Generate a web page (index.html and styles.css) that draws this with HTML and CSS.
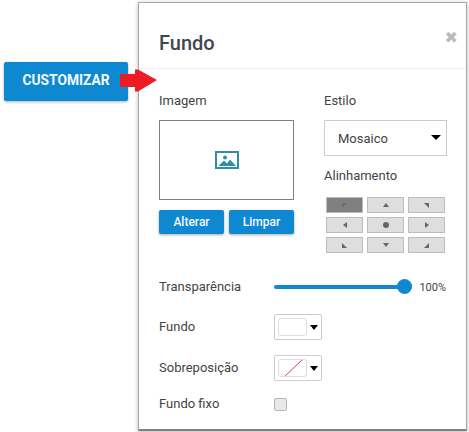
FILE: index.html
```html
<!DOCTYPE html>
<html lang="en">
<head>
  <meta charset="UTF-8" />
  <title>Fundo</title>
  <link rel="stylesheet" href="styles.css">
</head>
<body>
  <div class="page">
    <a class="customize" href="#">CUSTOMIZAR</a>

    <div class="modal">
      <div class="modal-head">
        <h2>Fundo</h2>
        <span class="close">&#10006;</span>
      </div>

      <div class="modal-body">
        <div class="columns">
          <div class="col-image">
            <div class="label">Imagem</div>
            <div class="image-box">
              <svg width="24" height="18" viewBox="0 0 24 18">
                <rect x="1" y="1" width="22" height="16" fill="none" stroke="#2f8fa8" stroke-width="2"/>
                <circle cx="10" cy="6.5" r="2" fill="#2f8fa8"/>
                <path d="M3.5 15 L9 9.5 L12 12.5 L15 8.5 L21 15 Z" fill="#2f8fa8"/>
              </svg>
            </div>
            <div class="image-buttons">
              <a class="btn" href="#">Alterar</a>
              <a class="btn" href="#">Limpar</a>
            </div>
          </div>

          <div class="col-style">
            <div class="label">Estilo</div>
            <div class="select">
              <span>Mosaico</span>
              <i class="caret"></i>
            </div>
            <div class="label label-align">Alinhamento</div>
            <div class="align-grid">
              <div class="cell active"><i class="corner tl"></i></div>
              <div class="cell"><i class="tri up"></i></div>
              <div class="cell"><i class="corner tr"></i></div>
              <div class="cell"><i class="tri left"></i></div>
              <div class="cell"><i class="dot"></i></div>
              <div class="cell"><i class="tri right"></i></div>
              <div class="cell"><i class="corner bl"></i></div>
              <div class="cell"><i class="tri down"></i></div>
              <div class="cell"><i class="corner br"></i></div>
            </div>
          </div>
        </div>

        <div class="row row-slider">
          <div class="row-label">Transparência</div>
          <div class="slider"><div class="slider-knob"></div></div>
          <div class="slider-value">100%</div>
        </div>

        <div class="row row-fundo">
          <div class="row-label">Fundo</div>
          <div class="swatch-picker">
            <div class="swatch"></div>
            <i class="caret small"></i>
          </div>
        </div>

        <div class="row row-over">
          <div class="row-label">Sobreposição</div>
          <div class="swatch-picker">
            <div class="swatch">
              <svg width="28" height="17" viewBox="0 0 28 17"><line x1="5" y1="17" x2="23" y2="0" stroke="#e0324b" stroke-width="1"/></svg>
            </div>
            <i class="caret small"></i>
          </div>
        </div>

        <div class="row row-fixed">
          <div class="row-label">Fundo fixo</div>
          <div class="checkbox"></div>
        </div>
      </div>
    </div>

    <svg class="arrow" width="38" height="24" viewBox="0 0 38 24">
      <path d="M0 5 H15 V0.5 H18 L37 11 L18 22.5 H15 V18 H0 Z" fill="#ed1c24"/>
    </svg>
  </div>
</body>
</html>
```

FILE: styles.css
```css
* {
  box-sizing: border-box;
}

html, body {
  margin: 0;
  padding: 0;
  background: #fff;
}

body {
  font-family: Roboto, "Liberation Sans", sans-serif;
  color: #444;
  overflow: hidden;
}

.page {
  position: relative;
  width: 469px;
  height: 432px;
  display: flex;
  align-items: flex-start;
  padding: 2px 2px 0 4px;
}

.customize {
  margin-top: 60px;
  width: 124px;
  height: 39px;
  line-height: 36px;
  text-align: center;
  background: #0f88d2;
  color: #f4f9fd;
  font-size: 13.8px;
  font-weight: 700;
  border-radius: 2px;
  text-decoration: none;
  box-shadow: 0 1px 3px rgba(0,0,0,0.3);
}

.modal {
  margin-left: 10px;
  width: 329px;
  height: 429px;
  background: #fff;
  border: 1px solid #a8a8a8;
  border-bottom: 2px solid #808080;
  box-shadow: 0 1px 4px rgba(0,0,0,0.3);
}

.modal-head {
  height: 66px;
  border-bottom: 1px solid #f0f0f0;
  display: flex;
  justify-content: space-between;
  padding: 27px 8px 0 20px;
}

.modal-head h2 {
  margin: 0;
  font-size: 20px;
  font-weight: 500;
  line-height: 26px;
  color: #3f4650;
}

.close {
  color: #bbb;
  font-size: 16px;
  line-height: 16px;
  font-family: "DejaVu Sans", sans-serif;
}

.modal-body {
  padding: 24px 20px 0 20px;
}

.columns {
  display: flex;
}

.label, .row-label {
  font-size: 13px;
  line-height: 16px;
  color: #444;
}

.col-image {
  width: 165px;
  flex: none;
}

.image-box {
  margin-top: 11px;
  width: 135px;
  height: 80px;
  border: 1px solid #808080;
  display: flex;
  align-items: center;
  justify-content: center;
}

.image-buttons {
  display: flex;
  gap: 5px;
  margin-top: 10px;
}

.btn {
  width: 65px;
  height: 24px;
  line-height: 24px;
  text-align: center;
  background: #0f88d2;
  color: #f4f9fd;
  font-size: 12px;
  font-weight: 500;
  border-radius: 2px;
  text-decoration: none;
  box-shadow: 0 1px 3px rgba(0,0,0,0.35);
}

.col-style {
  flex: 1;
}

.select {
  margin-top: 11px;
  width: 123px;
  height: 36px;
  border: 1px solid #ccc;
  display: flex;
  align-items: center;
  justify-content: space-between;
  padding: 0 5px 0 13px;
  font-size: 13px;
  color: #444;
}

.caret {
  width: 0;
  height: 0;
  border-left: 5px solid transparent;
  border-right: 5px solid transparent;
  border-top: 5px solid #000;
}

.select .caret {
  margin-top: -2px;
}

.caret.small {
  border-left-width: 4px;
  border-right-width: 4px;
}

.label-align {
  margin-top: 12px;
}

.align-grid {
  margin-top: 13px;
  margin-left: 2px;
  display: grid;
  grid-template-columns: repeat(3, 37px);
  grid-auto-rows: 16px;
  gap: 4px;
}

.cell {
  background: #dedede;
  border: 1px solid #bdbdbd;
  display: flex;
  align-items: center;
  justify-content: center;
}

.cell.active {
  background: #808080;
}

.cell i {
  display: block;
}

.tri {
  width: 0;
  height: 0;
}

.tri.up {
  border-left: 3px solid transparent;
  border-right: 3px solid transparent;
  border-bottom: 4px solid #666;
}

.tri.down {
  border-left: 3px solid transparent;
  border-right: 3px solid transparent;
  border-top: 4px solid #666;
}

.tri.left {
  border-top: 3px solid transparent;
  border-bottom: 3px solid transparent;
  border-right: 4px solid #666;
}

.tri.right {
  border-top: 3px solid transparent;
  border-bottom: 3px solid transparent;
  border-left: 4px solid #666;
}

.dot {
  width: 6px;
  height: 6px;
  border-radius: 50%;
  background: #666;
}

.corner {
  width: 0;
  height: 0;
  border-style: solid;
}

.corner.tl {
  border-width: 5px 5px 0 0;
  border-color: #6e6e6e transparent transparent transparent;
}

.corner.tr {
  border-width: 0 5px 5px 0;
  border-color: transparent #666 transparent transparent;
}

.corner.bl {
  border-width: 5px 0 0 5px;
  border-color: transparent transparent transparent #666;
}

.corner.br {
  border-width: 0 0 5px 5px;
  border-color: transparent transparent #666 transparent;
}

.row {
  display: flex;
  align-items: center;
}

.row-label {
  width: 115px;
  flex: none;
}

.row-slider {
  margin-top: 24px;
  height: 20px;
}

.slider {
  position: relative;
  width: 139px;
  height: 4px;
  background: #0f88d2;
  border-radius: 2px;
}

.slider-knob {
  position: absolute;
  right: 0;
  top: -6px;
  width: 15px;
  height: 15px;
  border-radius: 50%;
  background: #0f88d2;
}

.slider-value {
  margin-left: 7px;
  font-size: 11px;
  color: #444;
}

.row-fundo {
  margin-top: 17px;
}

.row-over {
  margin-top: 15px;
}

.row-fixed {
  margin-top: 15px;
}

.swatch-picker {
  width: 48px;
  height: 26px;
  border: 1px solid #ccc;
  border-radius: 2px;
  display: flex;
  align-items: center;
  justify-content: space-between;
  padding: 0 3px;
}

.swatch {
  width: 29px;
  height: 18px;
  border: 1px solid #ddd;
  border-radius: 3px;
  background: #fff;
  overflow: hidden;
}

.swatch svg {
  display: block;
}

.checkbox {
  width: 13px;
  height: 13px;
  border: 1px solid #b4b4b4;
  border-radius: 2px;
  background: #e9e9e9;
}

.arrow {
  position: absolute;
  left: 120px;
  top: 69px;
}
```
